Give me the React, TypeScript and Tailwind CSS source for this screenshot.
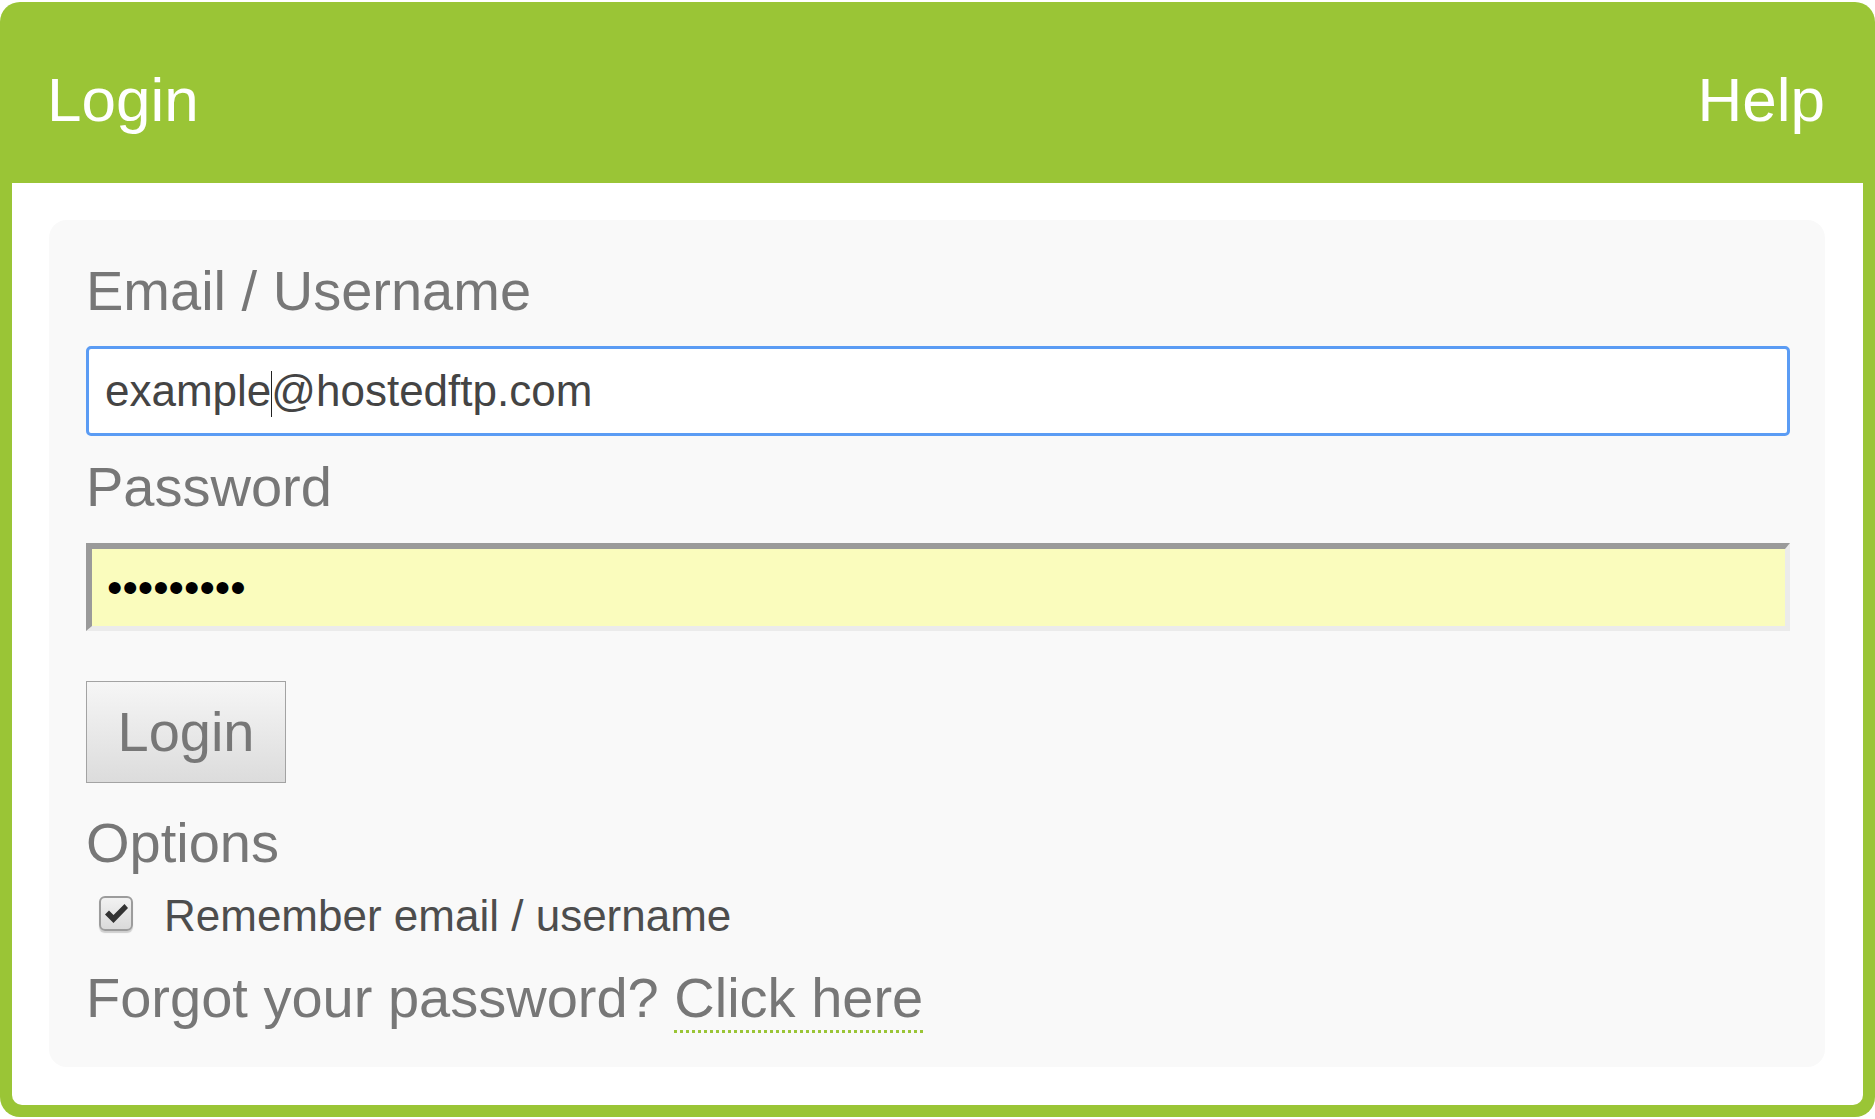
export default function App() {
  return (
    <div className="w-[1875px] h-[1119px] bg-white pt-[2px] font-['Liberation_Sans',Arial,sans-serif]">
      <div className="h-[1115px] flex flex-col rounded-[20px] bg-[#9ac536] px-[12px] pb-[12px]">
        {/* Header */}
        <header className="h-[181px] flex justify-between items-start pt-[62px] pl-[35px] pr-[38px] text-white text-[62px] leading-[72px]">
          <span>Login</span>
          <span>Help</span>
        </header>

        {/* Body */}
        <main className="flex-1 rounded-b-[10px] bg-white pt-[37px] pl-[37px] pr-[38px] pb-[38px]">
          <div className="h-full rounded-[18px] bg-[#f9f9f9] pt-[39px] pl-[37px] pr-[35px]">
            <label className="block text-[56px] leading-[64px] text-[#777777] mb-[23px]">Email / Username</label>
            <div className="h-[90px] flex items-center rounded-[5px] border-[3px] border-[#5b9cf4] bg-white pl-[16px] text-[44px] text-[#444444]">
              <span>
                example
                <span className="inline-block w-[1.5px] h-[46px] -mx-[0.75px] align-[-11px] bg-[#222222]" />
                @hostedftp.com
              </span>
            </div>

            <label className="block mt-[19px] text-[56px] leading-[64px] text-[#777777] mb-[24px]">Password</label>
            <div className="h-[88px] flex items-center bg-[#fafcbd] border-t-[6px] border-l-[6px] border-b-[5px] border-r-[5px] border-t-[#9a9a9a] border-l-[#9a9a9a] border-b-[#ebebeb] border-r-[#ebebeb] pl-[15px] text-[44px] text-black">
              <span>•••••••••</span>
            </div>

            <button className="mt-[50px] w-[200px] h-[102px] flex items-center justify-center border border-[#a3a3a3] bg-linear-to-b from-[#f6f6f6] to-[#dcdcdc] text-[56px] text-[#777777]">
              Login
            </button>

            <div className="mt-[28px] text-[56px] leading-[64px] text-[#777777]">Options</div>

            <div className="mt-[16px] flex items-start h-[50px]">
              <div className="mt-[5px] ml-[13px] w-[34px] h-[35px] rounded-[6px] border-2 border-[#9c9c9c] bg-linear-to-b from-[#f2f2f2] to-[#dadada] shadow-[0_2px_1px_#cfcfcf] flex items-center justify-center">
                <svg width="25" height="21" viewBox="0 0 25 21">
                  <path d="M1 11.5 L5 7.5 L9.5 12 L20.5 1 L24 5 L9.5 20 Z" fill="#333333" />
                </svg>
              </div>
              <span className="ml-[31px] text-[44px] leading-[50px] text-[#4d4d4d]">Remember email / username</span>
            </div>

            <div className="mt-[25px] text-[56px] leading-[64px] text-[#777777]">
              Forgot your password?{' '}
              <a className="border-b-[3px] border-dotted border-[#9ac536] pb-[1px]">Click here</a>
            </div>
          </div>
        </main>
      </div>
    </div>
  );
}
